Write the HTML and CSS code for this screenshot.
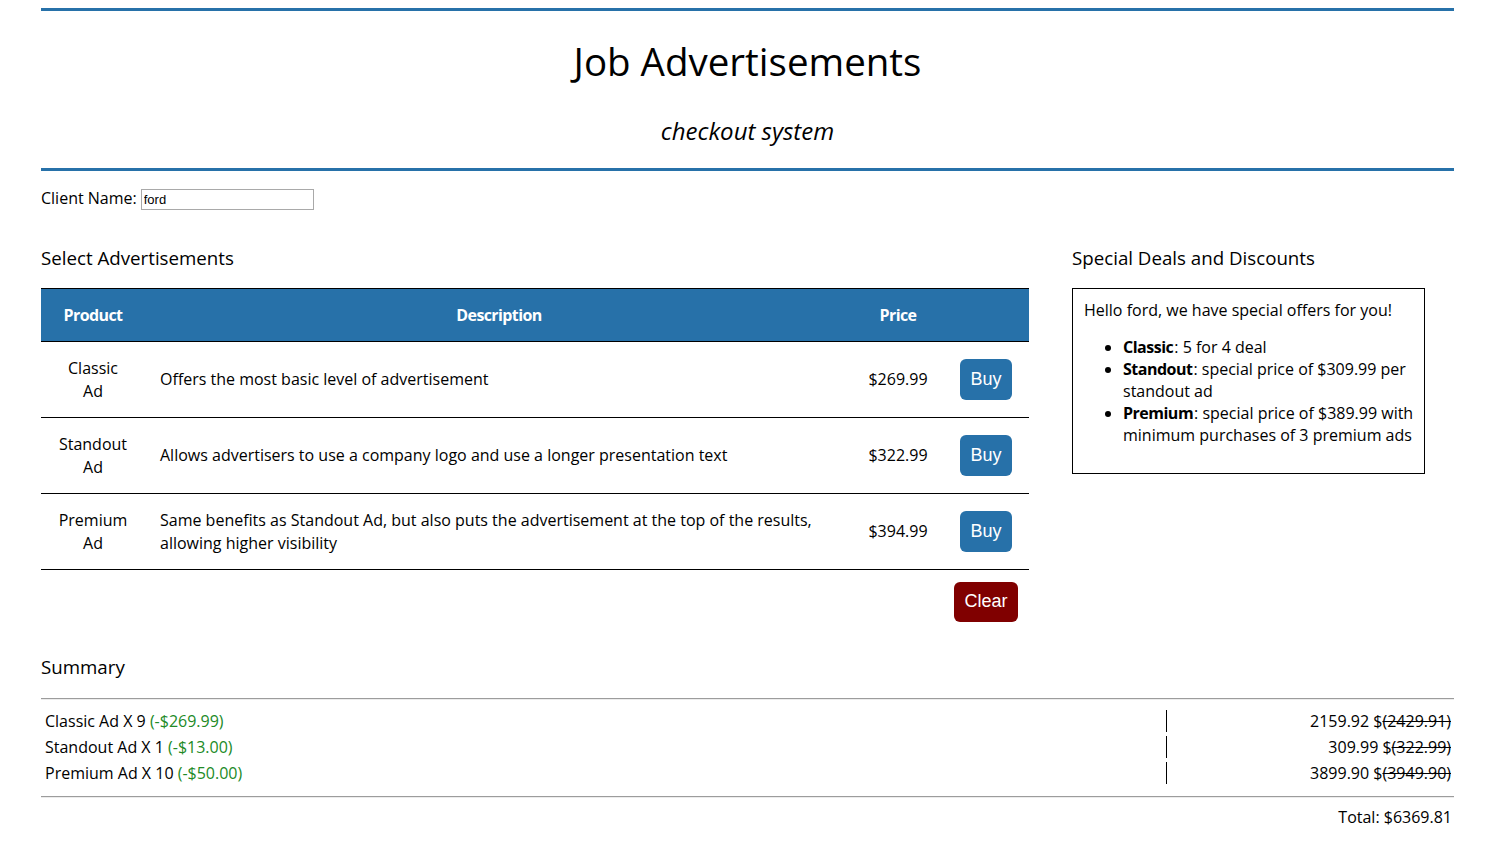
FILE: index.html
```html
<!DOCTYPE html>
<html lang="en">
<head>
<meta charset="utf-8">
<title>Job Advertisements</title>
<link rel="stylesheet" href="styles.css">
</head>
<body>
<div class="page">
  <header class="masthead">
    <h1 class="title">Job Advertisements</h1>
    <p class="subtitle">checkout system</p>
  </header>

  <div class="client">
    <label class="client-label" for="client">Client Name:</label>
    <input class="client-input" id="client" type="text" value="ford">
  </div>

  <div class="main">
    <section class="ads">
      <h3 class="section-title">Select Advertisements</h3>
      <table class="ad-table">
        <colgroup>
          <col class="c-product">
          <col class="c-desc">
          <col class="c-price">
          <col class="c-buy">
        </colgroup>
        <thead>
          <tr>
            <th>Product</th>
            <th>Description</th>
            <th>Price</th>
            <th></th>
          </tr>
        </thead>
        <tbody>
          <tr>
            <td class="product">Classic Ad</td>
            <td class="desc">Offers the most basic level of advertisement</td>
            <td class="price">$269.99</td>
            <td class="buy"><button class="btn btn-buy">Buy</button></td>
          </tr>
          <tr>
            <td class="product">Standout Ad</td>
            <td class="desc">Allows advertisers to use a company logo and use a longer presentation text</td>
            <td class="price">$322.99</td>
            <td class="buy"><button class="btn btn-buy">Buy</button></td>
          </tr>
          <tr>
            <td class="product">Premium Ad</td>
            <td class="desc">Same benefits as Standout Ad, but also puts the advertisement at the top of the results, allowing higher visibility</td>
            <td class="price">$394.99</td>
            <td class="buy"><button class="btn btn-buy">Buy</button></td>
          </tr>
        </tbody>
        <tfoot>
          <tr>
            <td colspan="3"></td>
            <td class="buy foot"><button class="btn btn-clear">Clear</button></td>
          </tr>
        </tfoot>
      </table>
    </section>

    <aside class="deals">
      <h3 class="section-title">Special Deals and Discounts</h3>
      <div class="deal-box">
        <p class="deal-hello">Hello ford, we have special offers for you!</p>
        <ul class="deal-list">
          <li><strong>Classic</strong>: 5 for 4 deal</li>
          <li><strong>Standout</strong>: special price of $309.99 per standout ad</li>
          <li><strong>Premium</strong>: special price of $389.99 with minimum purchases of 3 premium ads</li>
        </ul>
      </div>
    </aside>
  </div>

  <section class="summary">
    <h3 class="section-title">Summary</h3>
    <hr class="rule">
    <div class="summary-list">
      <div class="summary-row">
        <div class="s-item">Classic Ad X 9 <span class="saving">(-$269.99)</span></div>
        <div class="s-amount">2159.92 $<s>(2429.91)</s></div>
      </div>
      <div class="summary-row">
        <div class="s-item">Standout Ad X 1 <span class="saving">(-$13.00)</span></div>
        <div class="s-amount">309.99 $<s>(322.99)</s></div>
      </div>
      <div class="summary-row">
        <div class="s-item">Premium Ad X 10 <span class="saving">(-$50.00)</span></div>
        <div class="s-amount">3899.90 $<s>(3949.90)</s></div>
      </div>
    </div>
    <hr class="rule">
    <div class="total">Total: $6369.81</div>
  </section>
</div>
</body>
</html>
```

FILE: styles.css
```css
html, body {
  margin: 0;
  padding: 0;
  background: #fff;
}

body {
  font-family: "Open Sans", "Noto Sans", sans-serif;
  font-size: 16px;
  line-height: 22px;
  color: #000;
}

.page {
  margin: 0 46px 0 41px;
  padding-top: 8px;
}

.masthead {
  border-top: 3px solid #2771a9;
  border-bottom: 3px solid #2771a9;
  text-align: center;
  padding: 23px 0 22px;
}

.title {
  margin: 0;
  font-size: 38.5px;
  line-height: 54px;
  font-weight: 400;
}

.subtitle {
  margin: 28px 0 0;
  font-size: 24px;
  line-height: 30px;
  font-style: italic;
}

.client {
  display: flex;
  align-items: flex-start;
  margin-top: 18px;
  height: 21px;
}

.client-label {
  margin-right: 4px;
  line-height: 18px;
}

.client-input {
  box-sizing: border-box;
  width: 173px;
  height: 21px;
  margin: 0;
  padding: 1px 2px;
  border: 1px solid #a9a9a9;
  font-family: "Liberation Sans", Arial, sans-serif;
  font-size: 13px;
  color: #000;
}

.main {
  display: grid;
  grid-template-columns: 988px 353px;
  column-gap: 43px;
  margin-top: 34px;
}

.section-title {
  margin: 0 0 17px;
  font-size: 18.72px;
  line-height: 27px;
  font-weight: 400;
}

.ad-table {
  width: 988px;
  table-layout: fixed;
  border-collapse: collapse;
}

.c-product { width: 104px; }
.c-desc { width: 708px; }
.c-price { width: 90px; }
.c-buy { width: 86px; }

.ad-table thead tr {
  background: #2771a9;
  color: #fff;
  border-top: 1px solid #000;
  border-bottom: 1px solid #000;
}

.ad-table th {
  padding: 15px 0;
  font-weight: 700;
  letter-spacing: -0.6px;
  text-align: center;
  line-height: 22px;
}

.ad-table tbody tr {
  border-bottom: 1px solid #000;
}

.ad-table td {
  padding: 15px 15px;
  line-height: 22.5px;
  vertical-align: middle;
}

.ad-table td.product {
  text-align: center;
}

.ad-table td.price {
  text-align: center;
  padding: 0;
}

.ad-table td.buy {
  text-align: center;
  padding: 0;
}

.ad-table td.foot {
  padding-top: 12px;
}

.btn {
  font-family: "Liberation Sans", Arial, sans-serif;
  font-size: 18px;
  line-height: 21px;
  color: #fff;
  border: none;
  border-radius: 6px;
  padding: 10px 10px;
  margin: 0;
  cursor: pointer;
  vertical-align: middle;
}

.btn-buy {
  background: #2771a9;
}

.btn-clear {
  background: #800000;
  padding: 9px 10px 10px;
}

.deal-box {
  box-sizing: border-box;
  width: 353px;
  border: 1px solid #000;
  padding: 10px 6px 11px 11px;
}

.deal-hello {
  margin: 0 0 15px;
}

.deal-list {
  margin: 0 0 16px;
  padding-left: 39px;
}

.deal-list strong {
  font-weight: 700;
  letter-spacing: -0.5px;
  margin-right: 1px;
}

.summary {
  margin-top: 31px;
}

.summary .section-title {
  margin-bottom: 18px;
}

.rule {
  margin: 0;
  height: 0;
  border: none;
  border-top: 1px solid #9c9c9c;
  border-bottom: 1px solid #ececec;
}

.summary-list {
  display: flex;
  flex-direction: column;
  gap: 4px;
  padding: 10px 0 12px;
}

.summary-row {
  display: grid;
  grid-template-columns: 1125px 1fr;
  line-height: 22px;
}

.s-item {
  padding-left: 4px;
}

.s-amount {
  border-left: 1px solid #000;
  text-align: right;
  padding-right: 3px;
}

.saving {
  color: #218a26;
}

.total {
  margin-top: 8px;
  text-align: right;
  padding-right: 2px;
}
```
